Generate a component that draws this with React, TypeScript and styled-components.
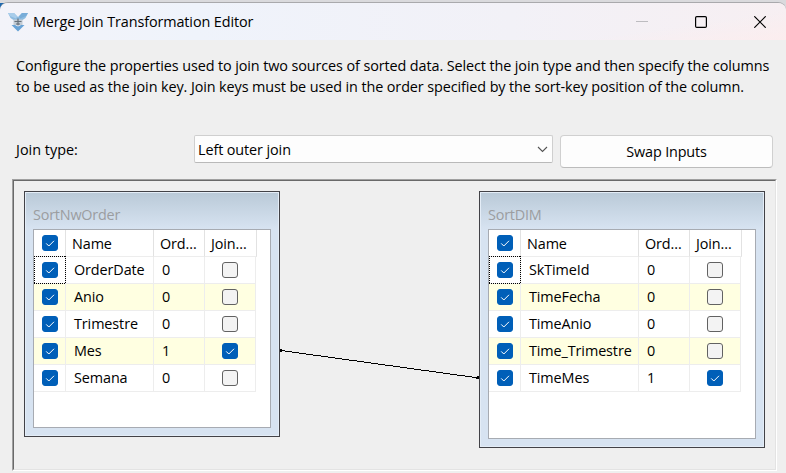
import React from 'react';
import styled, { createGlobalStyle, css } from 'styled-components';

const GlobalStyle = createGlobalStyle`
  * { box-sizing: border-box; }
  body {
    margin: 0;
    overflow: hidden;
    background: #efefef;
    color: #000;
    font: 14.4px/20px "Open Sans", "Noto Sans", sans-serif;
    letter-spacing: -0.1px;
  }
`;

const Desktop = styled.div`
  width: 786px;
  height: 473px;
  padding-top: 2px;
  overflow: hidden;
  background: linear-gradient(to right, #1d68ae 0 5px, #dadadd 12px) 0 3px / 100% 12px no-repeat, #dadadd;
`;

const Dialog = styled.main`
  height: 471px;
  display: flex;
  flex-direction: column;
  border-top: 1px solid #a9a9ac;
  border-radius: 8px 8px 0 0;
  overflow: hidden;
  background: #efefef;
`;

const TitleBar = styled.header`
  flex: none;
  height: 37px;
  display: flex;
  align-items: center;
  padding-left: 8px;
  background:
    linear-gradient(to bottom right, transparent 60%, rgba(255, 236, 236, 0.6)) 100% 0 / 260px 100% no-repeat,
    linear-gradient(to right, #f3f3f9, #eff3fb 25%, #f2f1f7 65%, #f7eff2);
`;

const Title = styled.h1`
  margin: 0 0 0 5px;
  font-size: 14.4px;
  font-weight: 400;
  letter-spacing: -0.1px;
  flex: 1;
`;

const WindowButtons = styled.div`
  display: flex;
  gap: 47px;
  padding-right: 20px;
  svg { display: block; }
`;

const Description = styled.p`
  flex: none;
  margin: 16px 0 0 16px;
  height: 79px;
  line-height: 20.5px;
  white-space: nowrap;
`;

const JoinBar = styled.div`
  flex: none;
  height: 44px;
  display: flex;
  align-items: flex-start;
`;

const FieldLabel = styled.label`
  width: 194px;
  padding: 5px 0 0 16px;
  letter-spacing: 0.02px;
`;

const Select = styled.div`
  width: 359px;
  height: 28px;
  display: flex;
  align-items: center;
  justify-content: space-between;
  padding: 1px 4px 0 3px;
  border: 1px solid #cfcfcf;
  border-bottom-color: #b9b9b9;
  border-radius: 2px;
  background: #fdfdfd;
`;

const Button = styled.button`
  width: 213px;
  height: 33px;
  margin-left: 7px;
  padding: 0;
  border: 1px solid #d0d0d0;
  border-bottom-color: #bcbcbc;
  border-radius: 4px;
  background: #fdfdfd;
  color: inherit;
  font: inherit;
  letter-spacing: -0.16px;
`;

const Sunken = styled.section`
  flex: none;
  width: 765px;
  height: 292px;
  margin-left: 12px;
  border: 1px solid;
  border-color: #a0a0a0 #fff #fff #a0a0a0;
`;

const Canvas = styled.div`
  height: 290px;
  display: flex;
  align-items: flex-start;
  padding: 10px 0 0 10px;
  border: 1px solid;
  border-color: #696969 #e3e3e3 #e3e3e3 #696969;
`;

const Connector = styled.svg`
  flex: none;
  width: 199px;
  height: 40px;
  margin-top: 154px;
`;

const Entity = styled.article<{ $w: number; $h: number }>`
  flex: none;
  width: ${(p) => p.$w}px;
  height: ${(p) => p.$h}px;
  display: flex;
  flex-direction: column;
  padding: 0 8px 8px;
  border: 1px solid #424247;
  box-shadow: inset 0 0 0 1px #e4edf7;
  background: linear-gradient(#b9c9d7, #d7e3f1 37px);
`;

const EntityTitle = styled.h2`
  flex: none;
  height: 37px;
  margin: 0;
  padding: 13px 0 0;
  color: #9b9da0;
  font-size: 14.4px;
  font-weight: 400;
  line-height: 20px;
  letter-spacing: -0.2px;
`;

const List = styled.div`
  flex: 1;
  border: 1px solid #a7abb2;
  background: #fff;
`;

const Row = styled.div<{ $name: number; $header?: boolean; $shaded?: boolean }>`
  display: grid;
  grid-template-columns: 32px ${(p) => p.$name}px 51px ${(p) => (p.$header ? 52 : 51)}px;
  width: max-content;
  height: 27px;
  background: ${(p) => (p.$shaded ? '#ffffe1' : '#fff')};
`;

const Cell = styled.div<{ $header?: boolean; $focus?: boolean; $join?: boolean }>`
  position: relative;
  display: flex;
  align-items: center;
  padding-left: 8px;
  border-right: 1px solid ${(p) => (p.$header ? '#e2e2e2' : '#ededed')};
  border-bottom: 1px solid #ededed;
  white-space: nowrap;
  ${(p) => p.$join && css`justify-content: center; padding: 0;`}
  ${(p) =>
    p.$focus &&
    css`
      &::after {
        content: '';
        position: absolute;
        inset: -1px -1px -1px 0;
        background:
          repeating-linear-gradient(to right, #000 0 1px, transparent 1px 2px) 0 0 / 100% 1px no-repeat,
          repeating-linear-gradient(to right, #000 0 1px, transparent 1px 2px) 0 100% / 100% 1px no-repeat,
          repeating-linear-gradient(to bottom, #000 0 1px, transparent 1px 2px) 0 0 / 1px 100% no-repeat,
          repeating-linear-gradient(to bottom, #000 0 1px, transparent 1px 2px) 100% 0 / 1px 100% no-repeat;
      }
    `}
`;

const HeaderCell = styled(Cell)`
  padding: 2px 0 0 6px;
`;

const Box = styled.span<{ $on?: boolean }>`
  width: 16px;
  height: 16px;
  flex: none;
  border: 1px solid ${(p) => (p.$on ? '#005fb8' : '#626262')};
  border-radius: 3px;
  background: ${(p) => (p.$on ? '#005fb8' : '#f3f3f3')};
  svg { display: block; }
`;

function Check({ on }: { on?: boolean }) {
  return (
    <Box $on={on}>
      {on && (
        <svg width="14" height="14" viewBox="0 0 14 14" fill="none" stroke="#fff" strokeWidth="1">
          <path d="M3.2 7.4 5.8 10 11 4.8" />
        </svg>
      )}
    </Box>
  );
}

type Column = [name: string, order: number];

function Source(p: { title: string; columns: Column[]; w: number; h: number; name: number }) {
  return (
    <Entity $w={p.w} $h={p.h}>
      <EntityTitle>{p.title}</EntityTitle>
      <List>
        <Row $name={p.name} $header>
          <Cell $header><Check on /></Cell>
          <HeaderCell $header>Name</HeaderCell>
          <HeaderCell $header>Ord...</HeaderCell>
          <HeaderCell $header>Join...</HeaderCell>
        </Row>
        {p.columns.map(([name, order], i) => (
          <Row key={name} $name={p.name} $shaded={i % 2 === 1}>
            <Cell $focus={i === 0}><Check on /></Cell>
            <Cell>{name}</Cell>
            <Cell>{order}</Cell>
            <Cell $join><Check on={order > 0} /></Cell>
          </Row>
        ))}
      </List>
    </Entity>
  );
}

const orderColumns: Column[] = [['OrderDate', 0], ['Anio', 0], ['Trimestre', 0], ['Mes', 1], ['Semana', 0]];
const timeColumns: Column[] = [['SkTimeId', 0], ['TimeFecha', 0], ['TimeAnio', 0], ['Time_Trimestre', 0], ['TimeMes', 1]];

function AppIcon() {
  return (
    <svg width="20" height="20" viewBox="0 0 20 20">
      <path d="M0 1h6l4 4 4-4h6l-2.5 5-4.5 3H7L2.500 6z" fill="#8dbbe0" />
      <path d="M0 1h6l3 3.500-1 2L2 4z" fill="#a9cdea" />
      <path d="M20 1h-6l-3 3.500 1 2 6-2.500z" fill="#78acd8" />
      <path d="M5.500 7.500h9V13h-9z" fill="#c3cbd3" />
      <path d="M10 6.500v7M6.500 9.500h7M8 12h4" stroke="#67707a" strokeWidth="1.200" />
      <path d="M3.500 13H7l3 1.500 3-1.500h3.500L10 19.500z" fill="#69a3d6" />
    </svg>
  );
}

export default function App() {
  return (
    <Desktop>
      <GlobalStyle />
      <Dialog>
        <TitleBar>
          <AppIcon />
          <Title>Merge Join Transformation Editor</Title>
          <WindowButtons>
            <svg width="12" height="12"><path d="M0 5.5h12" stroke="#bdbcc0" /></svg>
            <svg width="12" height="12" fill="none" stroke="#000" strokeWidth="1.2">
              <rect x=".6" y=".6" width="10.8" height="10.8" rx="1.2" />
            </svg>
            <svg width="12" height="12" stroke="#000" strokeWidth="1.2"><path d="m.3.3 11.4 11.4M11.7.3.3 11.7" /></svg>
          </WindowButtons>
        </TitleBar>
        <Description>
          Configure the properties used to join two sources of sorted data. Select the join type and then specify the columns
          <br />
          to be used as the join key. Join keys must be used in the order specified by the sort-key position of the column.
        </Description>
        <JoinBar>
          <FieldLabel>Join type:</FieldLabel>
          <Select>
            Left outer join
            <svg width="11" height="7" fill="none" stroke="#555" strokeWidth="1.1"><path d="m1 1 4.5 4.5L10 1" /></svg>
          </Select>
          <Button>Swap Inputs</Button>
        </JoinBar>
        <Sunken>
          <Canvas>
            <Source title="SortNwOrder" columns={orderColumns} w={256} h={246} name={88} />
            <Connector>
              <path d="M1 5.5 199 33" stroke="#000" fill="none" shapeRendering="crispEdges" />
              <path d="M0 4h2v3H0zM195 32h2v-1h2v3h-3v-1h-1z" />
            </Connector>
            <Source title="SortDIM" columns={timeColumns} w={286} h={257} name={118} />
          </Canvas>
        </Sunken>
      </Dialog>
    </Desktop>
  );
}
